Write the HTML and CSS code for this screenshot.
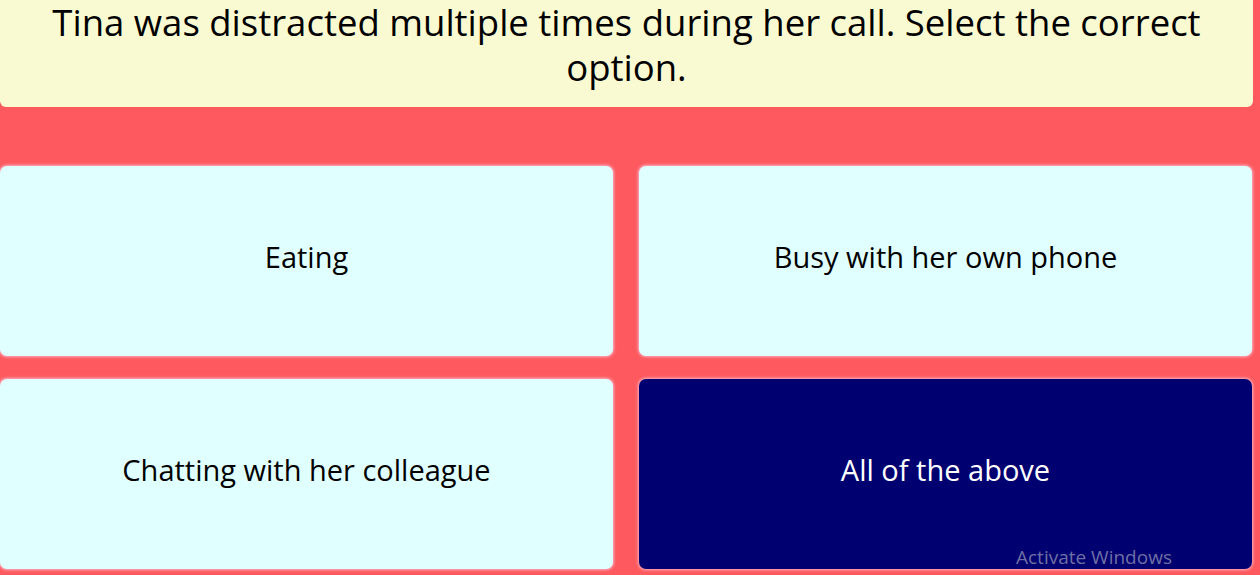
FILE: index.html
```html
<!DOCTYPE html>
<html>
<head>
<meta charset="utf-8">
<link rel="stylesheet" href="styles.css">
</head>
<body>
<div class="page">
  <div class="question">Tina was distracted multiple times during her call. Select the correct option.</div>
  <div class="options">
    <div class="option">Eating</div>
    <div class="option">Busy with her own phone</div>
    <div class="option">Chatting with her colleague</div>
    <div class="option selected">All of the above</div>
  </div>
</div>
<div class="watermark">Activate Windows</div>
</body>
</html>
```
FILE: styles.css
```css
html, body {
  margin: 0;
  padding: 0;
  height: 575px;
  overflow: hidden;
  background: #fd595e;
  font-family: "Open Sans", "Lato", sans-serif;
  font-variant-ligatures: none;
}
.page {
  width: 1253px;
  display: flex;
  flex-direction: column;
  gap: 59px;
}
.question {
  background: #fafad2;
  height: 107px;
  box-sizing: border-box;
  padding: 0 30px;
  border-radius: 0 0 6px 6px;
  text-align: center;
  font-size: 36.5px;
  line-height: 45px;
  color: #000;
}
.options {
  display: grid;
  grid-template-columns: 613px 613px;
  column-gap: 26px;
  row-gap: 23px;
  grid-auto-rows: 190px;
}
.option {
  background: #e0ffff;
  border-radius: 7px;
  box-shadow: 0 0 3px 1px rgba(255, 190, 210, 0.9);
  display: flex;
  align-items: center;
  justify-content: center;
  font-size: 29px;
  color: #000;
  padding-bottom: 10px;
  box-sizing: border-box;
}
.option.selected {
  background: #000070;
  color: #fff;
}
.watermark {
  position: absolute;
  left: 1016px;
  top: 544px;
  font-family: "Open Sans", sans-serif;
  font-size: 19px;
  color: rgba(175, 175, 195, 0.65);
}
```
